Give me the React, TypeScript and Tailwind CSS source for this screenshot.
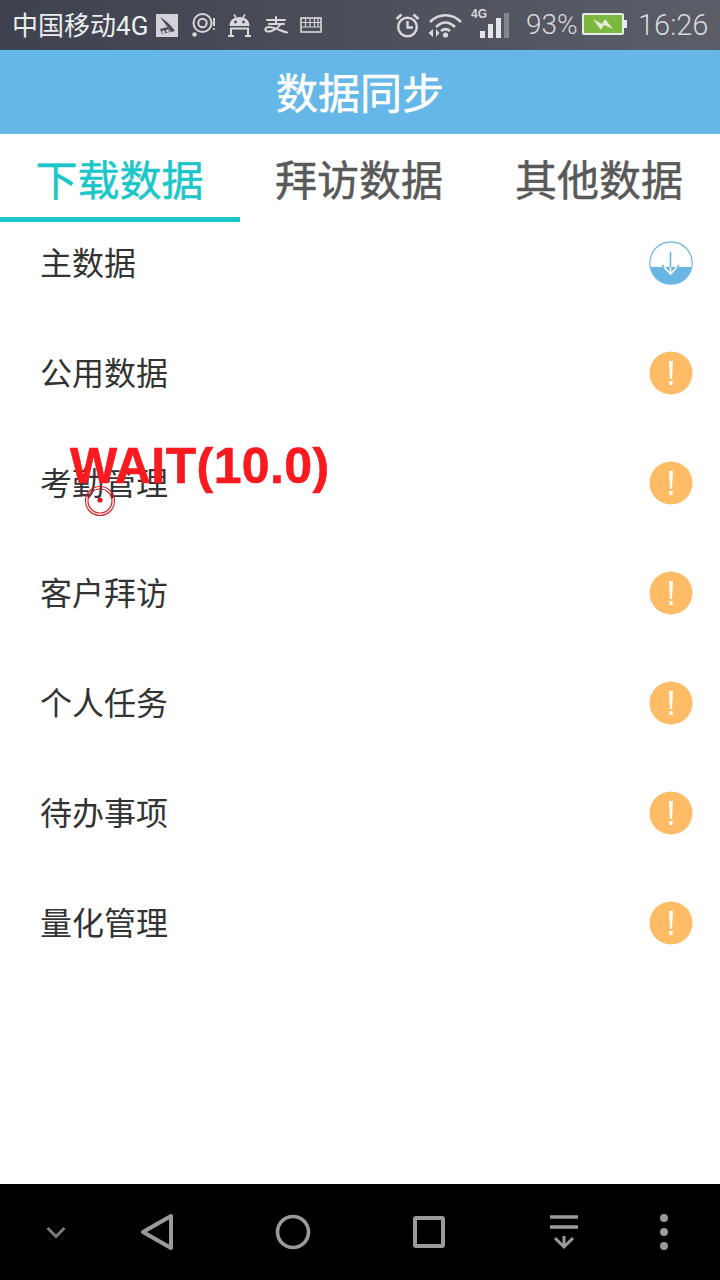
import React from "react";

function StatusLeft() {
  return (
    <div className="flex items-center">
      <span className="ml-[12px] w-[137px] whitespace-nowrap font-['Noto_Sans_CJK_SC',sans-serif] text-[26px] leading-none text-[#eceded]">
        中国移动<span className="font-['Roboto',sans-serif]">4G</span>
      </span>
      <svg width="22" height="23" viewBox="0 0 22 23" className="ml-[7px]">
        <rect width="22" height="23" fill="#d2d3d8" />
        <path d="M4 3 C9 6 14 10 19 17 L15 18 C13 14 9 10 4 3Z" fill="#4a4d58" />
        <path d="M4 15 L12 13 L14 18 L6 20Z" fill="#4a4d58" />
        <circle cx="7.5" cy="18" r="1.6" fill="#d2d3d8" />
        <circle cx="11.5" cy="17" r="1.4" fill="#d2d3d8" />
      </svg>
      <svg width="24" height="24" viewBox="0 0 24 24" className="ml-[14px]" fill="none" stroke="#d8d9dc">
        <circle cx="10.5" cy="10" r="9" strokeWidth="2" />
        <circle cx="10.5" cy="10" r="4.2" strokeWidth="2" />
        <circle cx="2.5" cy="21.5" r="2.2" fill="#d8d9dc" stroke="none" />
        <path d="M22 5 V13" strokeWidth="2" />
        <circle cx="22" cy="16" r="1.1" fill="#d8d9dc" stroke="none" />
      </svg>
      <svg width="23" height="23" viewBox="0 0 23 23" className="ml-[12px]" fill="none" stroke="#d8d9dc">
        <path d="M1.5 12 C1.5 6 6 3 11.5 3 C17 3 21.5 6 21.5 12 Z" fill="#d8d9dc" stroke="none" />
        <path d="M6 0.5 L8 3.5 M17 0.5 L15 3.5" strokeWidth="1.6" />
        <circle cx="7.5" cy="8" r="1.4" fill="#484b56" stroke="none" />
        <circle cx="15.5" cy="8" r="1.4" fill="#484b56" stroke="none" />
        <path d="M2 14.5 H21 M3 14.5 V22 M20 14.5 V22 M0 22 H6 M17 22 H23" strokeWidth="2" />
      </svg>
      <svg width="24" height="18" viewBox="0 0 24 18" className="ml-[13px]" fill="none" stroke="#d8d9dc" strokeWidth="2" strokeLinecap="round">
        <path d="M3 4 H21 M12 1 V8 M5 8 H20 M17 8 C13 13 7 16 3.5 15.5 C0 15 1 11 5 11 C10 11 17 15 23 16.5" />
      </svg>
      <svg width="22" height="16" viewBox="0 0 22 16" className="ml-[12px]" fill="none" stroke="#d8d9dc">
        <rect x="1" y="1" width="20" height="14" strokeWidth="1.6" />
        <path d="M1 5.5 H21 M1 10 H21 M5.5 1 V10 M10 1 V10 M14.5 1 V10 M18 1 V10" strokeWidth="1.2" />
      </svg>
    </div>
  );
}

function StatusRight() {
  return (
    <div className="mr-[14px] flex items-center">
      <svg width="25" height="25" viewBox="0 0 25 25" fill="none" stroke="#d8d9dc">
        <circle cx="12.5" cy="14" r="9.3" strokeWidth="2.4" />
        <path d="M12.5 8 V14.5 H18" strokeWidth="2.4" />
        <path d="M1.5 6 L6.5 1.5 M23.5 6 L18.5 1.5" strokeWidth="2.6" />
      </svg>
      <svg width="35" height="25" viewBox="0 0 35 25" className="ml-[8px]" fill="none" stroke="#d8d9dc" strokeWidth="2.6">
        <path d="M2 9 C11 0 24 0 33 9" />
        <path d="M8 14 C14 8 21 8 27 14" />
        <path d="M13 18 C16 15.5 19 15.5 22 18" />
        <circle cx="17.5" cy="22" r="2.6" fill="#d8d9dc" stroke="none" />
        <path d="M5 16 L0.5 20 L5 24 Z M8 16 L11.5 20 L8 24 Z" fill="#d8d9dc" stroke="none" />
      </svg>
      <div className="relative mb-[3px] ml-[8px] h-[29px] w-[38px]">
        <span className="absolute left-0 top-[-2px] font-['Liberation_Sans',sans-serif] text-[12px] font-bold leading-[14px] text-[#d8d9dc]">4G</span>
        <div className="absolute bottom-0 left-[9px] flex items-end gap-[3px]">
          <div className="h-[7px] w-[5px] bg-[#e4e5e7]" />
          <div className="h-[14px] w-[5px] bg-[#e4e5e7]" />
          <div className="h-[20px] w-[5px] bg-[#e4e5e7]" />
          <div className="h-[25px] w-[5px] bg-[#84868e]" />
        </div>
      </div>
      <span className="ml-[17px] w-[50px] whitespace-nowrap font-['Roboto',sans-serif] text-[28px] font-light leading-none text-[#d8d9dc]">93%</span>
      <svg width="45" height="22" viewBox="0 0 45 22" className="mb-[3px] ml-[6px]">
        <rect x="1" y="1" width="40" height="20" fill="#7cb83e" stroke="#e8e9ea" strokeWidth="2" rx="1" />
        <rect x="42" y="7" width="3" height="8" fill="#e8e9ea" />
        <path d="M11 6 L20 11 L23 6 L31 16 L22 12 L19 17 Z" fill="#e6ecdc" />
      </svg>
      <span className="ml-[11px] w-[68px] whitespace-nowrap font-['Roboto',sans-serif] text-[29px] font-light leading-none text-[#d8d9dc]">16:26</span>
    </div>
  );
}

function Download() {
  return (
    <svg width="44" height="44" viewBox="0 0 44 44" fill="none">
      <circle cx="22" cy="22" r="21.2" fill="#fff" stroke="#69b6e6" strokeWidth="1.2" />
      <path d="M1.2 26 H42.8 A21.2 21.2 0 0 1 1.2 26 Z" fill="#69b6e6" />
      <path d="M21.5 11 V26 M13 24 L15 26 M30 24 L28 26" stroke="#69b6e6" strokeWidth="1.6" />
      <path d="M21.5 26 V32 M15 26 L21.5 33 L28 26" stroke="#fff" strokeWidth="1.6" />
    </svg>
  );
}

function Warn() {
  return (
    <svg width="44" height="44" viewBox="0 0 44 44">
      <circle cx="22" cy="22" r="21.5" fill="#ffbc66" />
      <path d="M20 10 H24 L23 28 H21 Z" fill="#fff" />
      <rect x="20.4" y="30" width="3.2" height="4" fill="#fff" />
    </svg>
  );
}

const rows = ["公用数据", "考勤管理", "客户拜访", "个人任务", "待办事项", "量化管理"];

function Row({ label, icon }: { label: string; icon: React.ReactNode }) {
  return (
    <div className="flex h-[110px] items-center justify-between pl-[40px] pr-[27px]">
      <span className="pb-[4px] text-[32px] leading-none text-[#333333]">{label}</span>
      {icon}
    </div>
  );
}

export default function App() {
  return (
    <div className="relative flex h-[1280px] w-[720px] flex-col overflow-hidden bg-white font-['Noto_Sans_CJK_SC',sans-serif]">
      <div className="flex h-[50px] items-center justify-between bg-gradient-to-r from-[#3e414e] to-[#5b5d67]">
        <StatusLeft />
        <StatusRight />
      </div>
      <div className="flex h-[84px] items-center justify-center bg-[#65b7e8] pb-[2px] text-[42px] font-normal leading-none text-white [-webkit-text-stroke:0.5px_#ffffff]">数据同步</div>
      <div className="flex h-[88px] text-[42px] font-normal leading-none">
        <div className="flex w-[240px] items-center justify-center border-b-[5px] border-[#1bc6c8] pr-[1px] pt-[5px] text-[#1bc6c8] [-webkit-text-stroke:0.5px_#1bc6c8]">下载数据</div>
        <div className="flex w-[240px] items-center justify-center pr-[2px] text-[#595959] [-webkit-text-stroke:0.5px_#595959]">拜访数据</div>
        <div className="flex w-[240px] items-center justify-center pr-[2px] text-[#595959] [-webkit-text-stroke:0.5px_#595959]">其他数据</div>
      </div>
      <div className="-mt-[14px] flex-1">
        <Row label="主数据" icon={<Download />} />
        {rows.map((r) => (
          <Row key={r} label={r} icon={<Warn />} />
        ))}
      </div>
      <div className="h-[96px] bg-black">
        <svg width="720" height="96" viewBox="0 0 720 96" fill="none" stroke="#9a9a9a">
          <path d="M47.5 44 L56 52.5 L64.5 44" stroke="#7d7d7d" strokeWidth="3" />
          <path d="M171 32 V64 L143 48 Z" strokeWidth="4" strokeLinejoin="round" />
          <circle cx="293" cy="48" r="15.5" strokeWidth="3.6" />
          <rect x="415" y="34" width="28" height="28" strokeWidth="4" rx="1" />
          <path d="M550 33 H578 M550 43 H578" strokeWidth="3.4" />
          <path d="M564 52 V63 M555 54 L564 63 L573 54" strokeWidth="3" />
          <circle cx="664" cy="34" r="4" fill="#9a9a9a" stroke="none" />
          <circle cx="664" cy="48" r="4" fill="#9a9a9a" stroke="none" />
          <circle cx="664" cy="62" r="4" fill="#9a9a9a" stroke="none" />
        </svg>
      </div>
      <span className="absolute left-[70px] top-[437px] whitespace-nowrap font-['Liberation_Sans',sans-serif] text-[50px] font-bold leading-[58px] tracking-[0.4px] text-[#f81a1f] [-webkit-text-stroke:0.6px_#f81a1f]">WAIT(10.0)</span>
      <svg width="32" height="32" viewBox="0 0 32 32" className="absolute left-[84px] top-[485px]" fill="none" stroke="#d3232a">
        <circle cx="16" cy="16" r="14.5" strokeWidth="1.2" />
        <circle cx="16" cy="16" r="12" strokeWidth="1.2" />
        <circle cx="16" cy="15" r="2.6" fill="#e01a22" stroke="none" />
      </svg>
    </div>
  );
}
